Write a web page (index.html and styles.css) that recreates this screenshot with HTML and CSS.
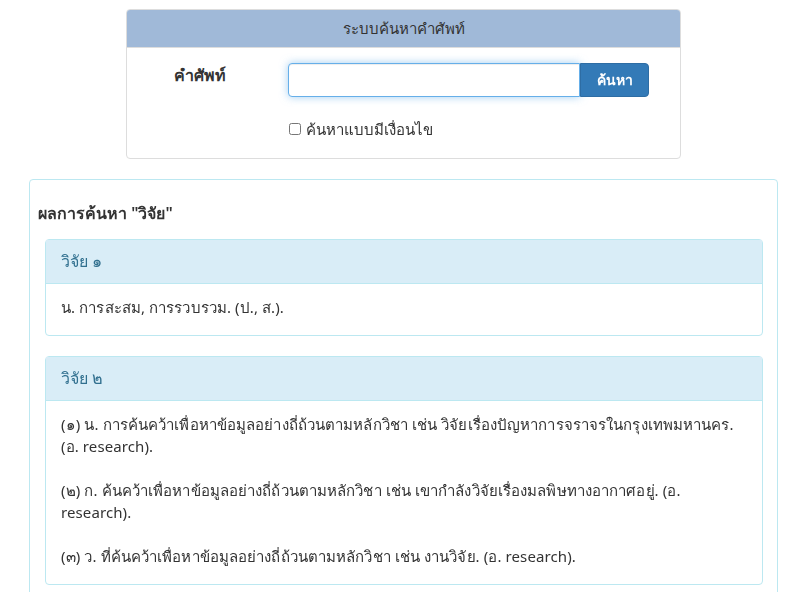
FILE: index.html
```html
<!DOCTYPE html>
<html>
<head>
<title>ระบบค้นหาคำศัพท์</title>
<meta name="viewport" content="width=device-width, initial-scale=1">
<link rel="stylesheet" href="styles.css">
</head>
<body>
<div class="search-panel">
  <div class="search-head">ระบบค้นหาคำศัพท์</div>
  <form class="search-body">
    <label for="word" class="word-label">คำศัพท์</label>
    <div class="input-group">
      <input id="word" type="text" name="word" autofocus>
      <button type="button" class="btn-search">ค้นหา</button>
    </div>
    <div></div>
    <label class="cond"><input type="checkbox" name="cond"> ค้นหาแบบมีเงื่อนไข</label>
  </form>
</div>

<div class="result-panel">
  <h4 class="result-title">ผลการค้นหา "วิจัย"</h4>

  <div class="entry">
    <div class="entry-head">วิจัย ๑</div>
    <div class="entry-body">
      <p>น. การสะสม, การรวบรวม. (ป., ส.).</p>
    </div>
  </div>

  <div class="entry">
    <div class="entry-head">วิจัย ๒</div>
    <div class="entry-body">
      <p>(๑) น. การค้นคว้าเพื่อหาข้อมูลอย่างถี่ถ้วนตามหลักวิชา เช่น วิจัยเรื่องปัญหาการจราจรในกรุงเทพมหานคร. (อ. research).</p>
      <p>(๒) ก. ค้นคว้าเพื่อหาข้อมูลอย่างถี่ถ้วนตามหลักวิชา เช่น เขากำลังวิจัยเรื่องมลพิษทางอากาศอยู่. (อ. research).</p>
      <p>(๓) ว. ที่ค้นคว้าเพื่อหาข้อมูลอย่างถี่ถ้วนตามหลักวิชา เช่น งานวิจัย. (อ. research).</p>
    </div>
  </div>
</div>
</body>
</html>
```

FILE: styles.css
```css
body {
  margin: 0;
  font-family: "Noto Sans", "DejaVu Sans", sans-serif;
  font-size: 15px;
  line-height: 22px;
  color: #333;
  background: #fff;
}

.search-panel {
  width: 553px;
  margin: 9px 0 0 126px;
  border: 1px solid #ddd;
  border-radius: 4px;
}
.search-head {
  background-color: #a0b9d8;
  height: 37px;
  line-height: 37px;
  text-align: center;
  border-bottom: 1px solid #ddd;
  border-radius: 3px 3px 0 0;
}
.search-body {
  display: grid;
  grid-template-columns: 146px 1fr;
  column-gap: 15px;
  row-gap: 21px;
  padding: 15px 0 18px 0;
}
.word-label {
  text-align: center;
  font-weight: bold;
  font-size: 16px;
  padding-top: 1px;
}
.input-group {
  display: flex;
  height: 34px;
}
.input-group input {
  width: 292px;
  box-sizing: border-box;
  height: 34px;
  border: 1px solid #66afe9;
  border-radius: 4px 0 0 4px;
  box-shadow: inset 0 1px 1px rgba(0,0,0,.075), 0 0 8px rgba(102,175,233,.6);
  outline: none;
  padding: 6px 12px;
  font-size: 15px;
}
.btn-search {
  width: 69px;
  height: 34px;
  background-color: #337ab7;
  border: 1px solid #2e6da4;
  border-radius: 0 4px 4px 0;
  color: #fff;
  font-weight: bold;
  font-family: inherit;
  font-size: 14px;
  cursor: pointer;
}
.cond {
  display: flex;
  align-items: center;
  gap: 5px;
}
.cond input {
  margin: 0 0 0 1px;
  width: 12px;
  height: 12px;
}

.result-panel {
  width: 725px;
  margin: 20px 0 0 29px;
  border: 1px solid #bce8f1;
  border-radius: 4px;
  padding: 14px 14px 1px 8px;
}
.result-title {
  margin: 8px 0 15px 0;
  font-size: 16px;
  font-weight: 600;
}
.entry {
  border: 1px solid #bce8f1;
  border-radius: 4px;
  margin: 0 0 20px 7px;
}
.entry-head {
  background-color: #d9edf7;
  color: #31708f;
  height: 43px;
  line-height: 43px;
  padding: 0 15px;
  border-bottom: 1px solid #bce8f1;
  font-size: 16px;
}
.entry-body {
  padding: 12px 15px 17px 15px;
  letter-spacing: 0.1px;
}
.entry-body p {
  margin: 0 0 22px 0;
}
.entry-body p:last-child {
  margin-bottom: 0;
}
```
